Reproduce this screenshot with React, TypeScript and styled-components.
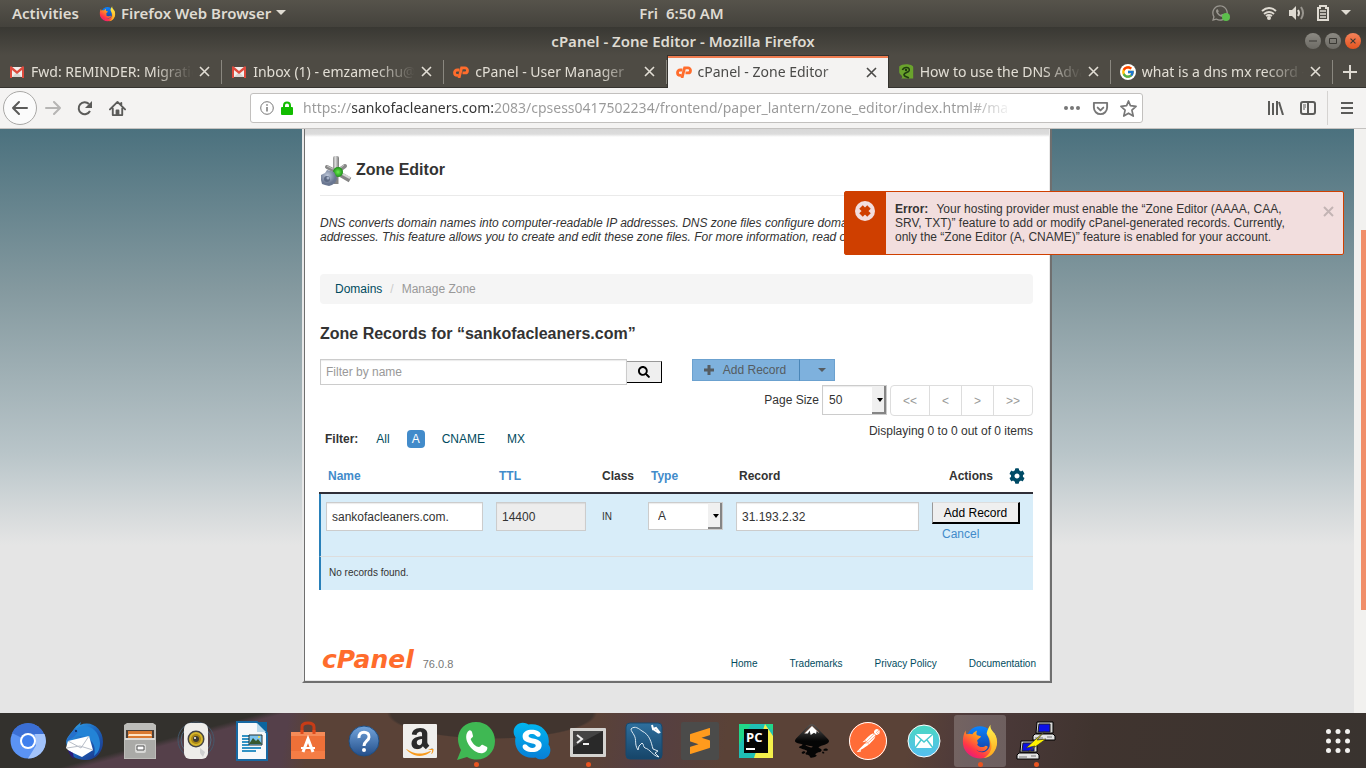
import React from "react";
import styled, { createGlobalStyle, css } from "styled-components";
import { FaAmazon, FaSkype, FaWhatsapp, FaCog, FaSearch } from "react-icons/fa";
import { SiInkscape, SiPostman, SiSublimetext } from "react-icons/si";
import { FcGoogle } from "react-icons/fc";

const uiFont = `"Noto Sans", "Open Sans", sans-serif`;
const pageFont = `"Liberation Sans", Arial, sans-serif`;

const GlobalStyle = createGlobalStyle`
  * { box-sizing: border-box; }
  body { margin: 0; font-family: ${pageFont}; font-size: 12px; line-height: 14px; color: #333; }
  button, input, select { font: inherit; color: inherit; margin: 0; padding: 0; }
  button { background: none; border: 0; }
  a { text-decoration: none; color: inherit; }
  h1, h2, p { margin: 0; }
  svg { display: block; flex: none; }
`;

const Desktop = styled.div`
  min-height: 100vh;
  display: flex;
  flex-direction: column;
`;

/* ---------- system bar and window title ---------- */

const SystemBar = styled.header`
  height: 27px;
  display: grid;
  grid-template-columns: 1fr auto 1fr;
  align-items: center;
  padding: 0 15px 1px 12px;
  background: linear-gradient(#56534b, #44423c);
  color: #dfdbd2;
  font: 600 15px/20px ${uiFont};
`;
const SystemGroup = styled.div<{ $end?: boolean }>`
  display: flex;
  align-items: center;
  gap: ${(p) => (p.$end ? "12px" : "20px")};
  justify-content: ${(p) => (p.$end ? "flex-end" : "flex-start")};
`;
const SystemButton = styled.button`
  display: flex;
  align-items: center;
  gap: 5px;
`;
const TrayWhatsApp = styled.span`
  position: relative;
  margin-right: 20px;
  color: #99968f;
  &::after {
    content: "";
    position: absolute;
    right: -1px;
    bottom: 1px;
    width: 8px;
    height: 8px;
    border-radius: 50%;
    background: #5cbf4c;
  }
`;
const TitleBar = styled.div`
  height: 28px;
  display: grid;
  grid-template-columns: 1fr auto 1fr;
  align-items: center;
  padding: 0 5px;
  background: linear-gradient(#393833, #4e4b44);
  color: #dfdbd2;
  font: 600 15px/20px ${uiFont};
`;
const WindowButtons = styled.div`
  display: flex;
  justify-content: flex-end;
  gap: 4px;
`;
const WindowButton = styled.button<{ $close?: boolean }>`
  width: 16px;
  height: 16px;
  border-radius: 50%;
  display: grid;
  place-items: center;
  color: #3a3934;
  background: ${(p) => (p.$close ? "linear-gradient(#f3825a, #e5541f)" : "linear-gradient(#8c8a83, #6c6a64)")};
`;

/* ---------- browser chrome ---------- */

const TabStrip = styled.nav`
  display: flex;
  height: 33px;
  background: #4e4b44;
  box-shadow: inset 0 -1px #35332f;
`;
const TabItem = styled.div<{ $active?: boolean }>`
  flex: 1 1 0;
  min-width: 0;
  display: flex;
  align-items: center;
  gap: 6px;
  padding: 0 12px 0 9px;
  font: 400 14px/20px ${uiFont};
  color: #e2ded5;
  background: linear-gradient(#8a877f, #8a877f) right 5px / 1px 24px no-repeat;
  ${(p) =>
    p.$active &&
    css`
      background: #f4f3f2;
      color: #4a4a48;
      border: solid #35332f;
      border-width: 1px 1px 0;
      padding: 0 11px 0 8px;
      box-shadow: inset 0 2px #ef7c50;
    `}
`;
const TabIcon = styled.span`
  width: 16px;
  display: grid;
  place-items: center;
`;
const TabLabel = styled.a`
  flex: 1;
  min-width: 0;
  overflow: hidden;
  white-space: nowrap;
  mask-image: linear-gradient(to right, #000 calc(100% - 40px), transparent);
`;
const NewTab = styled.button`
  width: 33px;
  display: grid;
  place-items: center;
  color: #dedad2;
`;
const Toolbar = styled.div`
  height: 41px;
  display: flex;
  align-items: center;
  padding: 0 3px;
  background: #f4f3f2;
  border-bottom: 1px solid #c4c2c0;
  color: #5b5b59;
`;
const BackButton = styled.button`
  width: 34px;
  height: 34px;
  border: 1px solid #a9a8a6;
  border-radius: 50%;
  background: #fbfbfb;
  display: grid;
  place-items: center;
`;
const ToolButton = styled.button<{ $faded?: boolean }>`
  width: 32px;
  height: 32px;
  display: grid;
  place-items: center;
  opacity: ${(p) => (p.$faded ? 0.4 : 1)};
`;
const AddressBar = styled.form`
  flex: 1;
  min-width: 0;
  height: 30px;
  margin: 0 117px;
  display: flex;
  align-items: center;
  gap: 6px;
  padding: 0 3px 0 9px;
  background: #fff;
  border: 1px solid #c2c0be;
  border-radius: 3px;
  color: #777;
`;
const AddressInput = styled.input`
  flex: 1;
  min-width: 0;
  margin: 0 26px 0 3px;
  padding: 0;
  border: 0;
  outline: 0;
  font: 400 14px/20px ${uiFont};
  color: transparent;
  background: linear-gradient(to right, #999 49px, #333 49px, #333 190px, #999 190px, #999 calc(100% - 60px), #fff calc(100% - 16px));
  background-clip: text;
`;
const AddressButton = styled.button`
  width: 22px;
  height: 22px;
  display: grid;
  place-items: center;
`;
const MenuDivider = styled.div`
  width: 1px;
  height: 34px;
  margin: 0 3px;
  background: #d5d3d1;
`;

/* ---------- page ---------- */

const Viewport = styled.div`
  flex: 1;
  display: flex;
`;
const Page = styled.main`
  position: relative;
  flex: 1;
  min-width: 0;
  padding-bottom: 30px;
  background: linear-gradient(#4b717e, #84999f 160px, #b9c5c9 325px, #e5e5e5 416px);
`;
const ScrollTrack = styled.div`
  width: 12px;
  padding: 101px 0 103px 7px;
  background: #f2f1ef;
  display: flex;
`;
const ScrollThumb = styled.div`
  flex: 1;
  background: #f08e69;
`;
const Panel = styled.div`
  max-width: 750px;
  margin: 0 auto;
  padding: 26px 17px 9px 16px;
  background: linear-gradient(#d8d8d8, #dcdcdc 5px, #fff 8px);
  border: solid #6f6f6f;
  border-width: 0 2px 2px 2px;
  border-left-color: #e8e8e8;
  box-shadow: inset 1px 0 #6f6f6f, inset -1px -1px #e8e8e8;
`;
const PageTitle = styled.div`
  display: flex;
  align-items: center;
  gap: 4px;
  padding-bottom: 8px;
  border-bottom: 1px solid #eaeaea;
`;
const Heading = styled.h1`
  font-size: 16px;
  line-height: 20px;
  padding-bottom: 2px;
`;
const SubHeading = styled.h2`
  font-size: 16px;
  line-height: 20px;
  margin: 20px 0 15px;
`;
const Intro = styled.p`
  font-style: italic;
  margin: 20px 0 30px;
`;
const Crumbs = styled.nav`
  display: flex;
  gap: 8px;
  padding: 8px 15px;
  background: #f5f5f5;
  border-radius: 4px;
  color: #999;
`;
const CrumbSlash = styled.span`
  color: #ccc;
`;
const PageLink = styled.a`
  color: #004b5e;
`;
const SearchRow = styled.div`
  display: flex;
  align-items: flex-start;
`;
const SearchGroup = styled.form`
  display: flex;
  align-items: center;
  width: 342px;
  margin-right: 30px;
`;
const TextInput = styled.input`
  width: 100%;
  height: 29px;
  padding: 0 5px;
  border: 1px solid #ccc;
  background: #fff;
  box-shadow: inset 0 1px 1px rgba(0, 0, 0, 0.08);
  &:read-only {
    background: #ededed;
  }
  &::placeholder {
    color: #999;
  }
`;
const SearchInput = styled(TextInput)`
  flex: 1;
  height: 26px;
`;
const SearchButton = styled.button`
  width: 35px;
  height: 22px;
  display: grid;
  place-items: center;
  background: #efefef;
  border: solid #000;
  border-width: 1px 1px 1px 0;
  border-top-color: #999;
  color: #000;
`;
const SplitButton = styled.div`
  display: flex;
`;
const SplitPart = styled.button<{ $caret?: boolean }>`
  height: 22px;
  width: ${(p) => (p.$caret ? "36px" : "108px")};
  display: flex;
  align-items: center;
  justify-content: center;
  gap: 8px;
  padding: ${(p) => (p.$caret ? "0 0 0 9px" : "0 3px 0 0")};
  background: #7eb1dd;
  border: 1px solid #6ba1cf;
  border-left-color: ${(p) => (p.$caret ? "#4a86b8" : "#6ba1cf")};
  margin-left: ${(p) => (p.$caret ? "-1px" : "0")};
  color: #555c62;
`;
const Pager = styled.div`
  display: flex;
  justify-content: flex-end;
  align-items: flex-start;
`;
const PagerLabel = styled.label`
  padding: 8px 3px 0 0;
`;
const SelectBox = styled.div<{ $small?: boolean }>`
  position: relative;
  width: ${(p) => (p.$small ? "65px" : "75px")};
  height: ${(p) => (p.$small ? "30px" : "28px")};
  &::after {
    content: "";
    position: absolute;
    top: 1px;
    right: 1px;
    bottom: 1px;
    width: 12px;
    border: solid #858585;
    border-width: 0 2px 2px 0;
    background: linear-gradient(#f0f0f0, #f0f0f0);
    pointer-events: none;
  }
  &::before {
    content: "";
    position: absolute;
    z-index: 1;
    top: calc(50% - 2px);
    right: 4px;
    border: solid transparent;
    border-width: 4px 3px 0;
    border-top-color: #000;
    pointer-events: none;
  }
`;
const Select = styled.select<{ $indent?: boolean }>`
  appearance: none;
  width: 100%;
  height: 100%;
  padding-left: ${(p) => (p.$indent ? "9px" : "6px")};
  border: 1px solid #ccc;
  border-radius: 0;
  background: #fff;
  box-shadow: inset 0 1px 1px rgba(0, 0, 0, 0.08);
`;
const PageButtons = styled.div`
  display: flex;
  margin-left: 3px;
  border: 1px solid #ddd;
  border-radius: 4px;
`;
const PageButton = styled.button<{ $wide?: boolean }>`
  box-sizing: content-box;
  width: ${(p) => (p.$wide ? "38px" : "31px")};
  height: 29px;
  color: #999;
  & + & {
    border-left: 1px solid #ddd;
  }
`;
const FilterRow = styled.div`
  display: flex;
  justify-content: space-between;
`;
const Filters = styled.div`
  display: flex;
  align-items: center;
  padding: 14px 0 0 5px;
`;
const FilterTitle = styled.strong`
  margin-right: 13px;
`;
const FilterLink = styled.a<{ $active?: boolean }>`
  padding: 2px 5px;
  margin-right: 12px;
  border-radius: 4px;
  color: ${(p) => (p.$active ? "#fff" : "#004b5e")};
  background: ${(p) => (p.$active ? "#428bca" : "none")};
`;
const Count = styled.div`
  padding-top: 8px;
`;
const Records = styled.table`
  width: calc(100% + 1px);
  margin-left: -1px;
  table-layout: fixed;
  border-collapse: separate;
  border-spacing: 0;
`;
const HeadCell = styled.th<{ $sortable?: boolean }>`
  padding: 21px 8px 9px;
  text-align: left;
  border-bottom: 2px solid #2f2f38;
  color: ${(p) => (p.$sortable ? "#428bca" : "#333")};
  &:first-child {
    padding-left: 9px;
  }
`;
const ActionsHead = styled.div`
  display: flex;
  align-items: center;
  justify-content: flex-end;
  height: 14px;
  gap: 16px;
  color: #333;
`;
const IconButton = styled.button`
  color: #004b66;
`;
const Cell = styled.td<{ $text?: boolean }>`
  height: 63px;
  padding: ${(p) => (p.$text ? "16px 8px" : "8px 8px 0 5px")};
  font-size: ${(p) => (p.$text ? "10px" : "12px")};
  vertical-align: top;
  background: #d8edf9;
  border-bottom: 1px solid #ddd;
  &:first-child {
    border-left: 2px solid #2980b9;
  }
`;
const EmptyCell = styled(Cell)`
  height: 33px;
  padding: 9px 8px;
  font-size: 10px;
  border-bottom: 0;
`;
const SubmitButton = styled.button`
  display: block;
  width: 88px;
  height: 22px;
  background: #efefef;
  border: solid #000;
  border-width: 1px 2px 2px 1px;
  border-top-color: #ddd;
  border-left-color: #999;
  color: #000;
`;
const CancelLink = styled.a`
  display: inline-block;
  padding: 3px 10px;
  color: #428bca;
`;
const Footer = styled.footer`
  display: flex;
  align-items: center;
  margin: 57px -3px 0 2px;
  height: 25px;
`;
const Wordmark = styled.a`
  color: #ff6c2c;
  font: italic 700 25px/25px "DejaVu Sans", sans-serif;
`;
const Version = styled.span`
  margin: 9px auto 0 9px;
  color: #777;
  font-size: 11px;
`;
const FooterLinks = styled.nav`
  display: flex;
  gap: 32px;
  margin-top: 8px;
  font-size: 10px;
`;

const Toast = styled.div`
  position: absolute;
  top: 62px;
  right: 10px;
  width: 500px;
  display: flex;
  background: #f2dede;
  border: 1px solid #cf3f00;
  border-radius: 2px;
`;
const ToastIcon = styled.div`
  width: 41px;
  padding: 9px 10px;
  background: #cf3f00;
`;
const ToastText = styled.p`
  flex: 1;
  padding: 10px 9px;
`;
const ToastTitle = styled.strong`
  margin-right: 5px;
`;
const ToastClose = styled.button`
  align-self: flex-start;
  padding: 14px 9px 0 4px;
  color: #c3b4b4;
`;

/* ---------- dock ---------- */

const Dock = styled.nav`
  height: 55px;
  display: flex;
  align-items: center;
  background:
    radial-gradient(ellipse 105px 26px at 492px 0, #41352f 96%, transparent),
    linear-gradient(165deg, #33312d 68px, transparent 74px) 0 0 / 300px 55px no-repeat,
    linear-gradient(100deg, #55404a 0 285px, #5a4237 310px 590px, #553f43 640px, #5a4237 720px 900px, #4d3a3b 960px, #40342f 1080px, #39332f);
`;
const DockButton = styled.button<{ $active?: boolean; $running?: boolean; $last?: boolean }>`
  position: relative;
  width: 52px;
  height: 52px;
  margin: 0 2px;
  margin-left: ${(p) => (p.$last ? "auto" : "2px")};
  border-radius: 3px;
  display: grid;
  place-items: center;
  background: ${(p) => (p.$active ? "rgba(255,255,255,0.2)" : "none")};
  ${(p) =>
    p.$running &&
    css`
      &::after {
        content: "";
        position: absolute;
        left: 24px;
        bottom: 0;
        width: 5px;
        height: 5px;
        border-radius: 50%;
        background: #e95420;
      }
    `}
`;

/* ---------- drawings ---------- */

const Art = ({ children, size = 40 }: { children: React.ReactNode; size?: number }) => (
  <svg width={size} height={size} viewBox="0 0 40 40" aria-hidden="true">{children}</svg>
);

const Caret = () => (
  <svg width="10" height="6" viewBox="0 0 10 6" aria-hidden="true"><path d="M0 0h10L5 5z" fill="currentColor" /></svg>
);

const Cross = ({ size = 11, width = 2 }: { size?: number; width?: number }) => (
  <svg width={size} height={size} viewBox="0 0 11 11" aria-hidden="true">
    <path d="M1 1l9 9M10 1l-9 9" stroke="currentColor" strokeWidth={width} />
  </svg>
);

const Firefox = ({ size, id }: { size: number; id: string }) => (
  <Art size={size}>
    <defs>
      <linearGradient id={id + "a"} x1="1" y1="0" x2="0.2" y2="1">
        <stop offset="0" stopColor="#ffe226" /><stop offset=".4" stopColor="#ff9a1f" />
        <stop offset=".75" stopColor="#ff3647" /><stop offset="1" stopColor="#e31587" />
      </linearGradient>
      <linearGradient id={id + "b"} x1="0" y1="0" x2="0" y2="1">
        <stop offset="0" stopColor="#0a84ff" /><stop offset="1" stopColor="#183b9c" />
      </linearGradient>
      <linearGradient id={id + "c"} x1="0" y1="0" x2="0" y2="1">
        <stop offset="0" stopColor="#fff44f" /><stop offset="1" stopColor="#ffa41c" />
      </linearGradient>
    </defs>
    <circle cx="20" cy="19" r="14.5" fill={`url(#${id}b)`} />
    <path d="M5 9c0 3 0 3 1 4 2-1 4-1 6 0 1-2 3-3 5-4-1 2-1 4 0 5l4 1c0 2-4 3-4 5 1 2 1 2 0 4 2 3 7 3 9 1 2 0 2 1 2 2-3 5-9 5-12 2 4 5 12 3 14-3 1-6-1-10-3-13 4 1 7 5 8 8 1-4 0-8-1-11 4 6 5 14 1 20C28 42 9 41 3 27 1 21 2 13 5 9z" fill={`url(#${id}a)`} />
    <path d="M27 12c1-4 2-6 4-9-1 7 7 8 7 18 0 9-6 16-14 17 7-4 10-11 7-18-1-4-3-6-4-8z" fill={`url(#${id}c)`} />
  </Art>
);

const CpMark = () => (
  <svg width="16" height="12" viewBox="0 0 16 12" fill="none" stroke="#ff6c2c" strokeWidth="2.8" aria-hidden="true">
    <path d="M6.500 4H4.200a2.600 2.600 0 0 0 0 5.400H5.600" />
    <path d="M6 12L8.600 1.900H12a2.400 2.400 0 0 1 0 5H9.500" />
  </svg>
);

const Gmail = () => (
  <svg width="14" height="12" viewBox="0 0 14 12" aria-hidden="true">
    <path d="M1 1h12v10H1z" fill="#f2f0ee" /><path d="M2 11l5-5 5 5z" fill="#d9d5d2" />
    <path d="M0 12V1l1-1 6 5 6-5 1 1v11h-2V4L7 8 2 4v8z" fill="#dd4b3e" />
  </svg>
);

const Dns = () => (
  <Art size={16}>
    <path d="M3 6C12-3 38 0 38 8v28H8c8-6-6-10-5-16z" fill="#6aa32c" />
    <path d="M11 15c4-9 19-8 17 1-2 6-11 4-13 10 0 6 8 6 12 9" fill="none" stroke="#1f3b10" strokeWidth="4" />
    <circle cx="20" cy="15" r="3" fill="#1f3b10" />
  </Art>
);

const ZoneIcon = () => (
  <svg width="32" height="32" viewBox="0 0 32 32" aria-hidden="true">
    <defs>
      <radialGradient id="zg"><stop offset="0" stopColor="#6bf04d" /><stop offset="1" stopColor="#1e8d1a" /></radialGradient>
      <linearGradient id="zs"><stop offset="0" stopColor="#8c8c8c" /><stop offset=".4" stopColor="#ddd" /><stop offset="1" stopColor="#777" /></linearGradient>
      <radialGradient id="zb" cx=".4" cy=".35"><stop offset="0" stopColor="#bcc6d8" /><stop offset="1" stopColor="#6a7791" /></radialGradient>
    </defs>
    <path d="M7 12l8 4M25 11l-7 5" stroke="#888" strokeWidth="4" strokeLinecap="round" />
    <path d="M7 11l8 4M24 10l-5 4" stroke="#c4c4c4" strokeWidth="1" />
    <path d="M18 18l12 7M16 20v9" stroke="#858585" strokeWidth="5" />
    <path d="M19 17l11 6" stroke="#d4d4d4" strokeWidth="2" />
    <rect x="13" y="1" width="6" height="15" rx="2" fill="url(#zs)" />
    <circle cx="18" cy="17" r="5" fill="url(#zg)" />
    <path d="M1 20l4-2 2-3 4 1 3 1 2 4 1 3-2 4-3 2-3 1-4-1-3-1-1-4z" fill="url(#zb)" />
    <circle cx="7" cy="24" r="3" fill="#5d6a84" /><circle cx="8" cy="23" r="1.5" fill="#a4b1c8" />
  </svg>
);

const Putty = () => (
  <Art>
    {[[17, 1], [1, 20]].map(([x, y]) => (
      <g key={x} transform={`translate(${x} ${y})`}>
        <path d="M4 0h16v11H3z" fill="#d6d6d6" stroke="#000" /><path d="M6 2h11v8H5z" fill="#0b10e8" stroke="#222" />
        <path d="M2 12h18l2 2v4H0v-4z" fill="#e4e4e4" stroke="#000" /><path d="M2 16h8M14 15h5" stroke="#777" />
      </g>
    ))}
    <path d="M29 10L10 27l9-2-7 6 18-13-9 1z" fill="#fff200" stroke="#333" strokeWidth=".7" />
  </Art>
);

type App = { name: string; art: React.ReactNode; running?: boolean; active?: boolean };

const apps: App[] = [
  { name: "Chromium", art: (
    <Art>
      <circle cx="20" cy="20" r="17.5" fill="#5b93f4" />
      <path d="M20 20L4 12A17.500 17.500 0 0 1 36 13H20z" fill="#3b6fd4" />
      <path d="M20 37.500l8-13L27 13h9.500A17.500 17.500 0 0 1 20 37.500z" fill="#a2c3fb" />
      <circle cx="20" cy="20" r="8" fill="#fff" /><circle cx="20" cy="20" r="6" fill="#4080ee" />
    </Art>) },
  { name: "Thunderbird", art: (
    <Art>
      <defs><linearGradient id="tb" x1="0" y1="0" x2="1" y2="1"><stop offset="0" stopColor="#36aef0" /><stop offset=".5" stopColor="#1d67bf" /><stop offset="1" stopColor="#1c2f80" /></linearGradient></defs>
      <path d="M10 8c3-4 6-6 7-7l-1 3C28-1 39 8 39 21c0 10-7 18-17 18C11 39 5 34 3 25 0 18 6 14 10 8z" fill="url(#tb)" />
      <path d="M12 8c9-7 23-1 24 14 0 6-2 10-6 13 3-10-2-21-18-20z" fill="#2383d6" />
      <path d="M4 20l21-5 4 14-11 7-13-6-3-3z" fill="#fff" /><path d="M4 20l13 7 8-12M3 27l13-2 13 4" fill="none" stroke="#b8bec8" />
      <path d="M4 29c1 4 3 7 6 9l-1-6z" fill="#2c1c7c" /><path d="M2 21c2-6 6-9 9-14l3 4-4 5z" fill="#2671cc" /><circle cx="12" cy="10" r="1" fill="#0c2552" />
    </Art>) },
  { name: "Files", art: (
    <Art>
      <path d="M4 4l3-2h26l3 2v34H4z" fill="#bdbdb9" /><path d="M6 9h28v9H6z" fill="#493f38" />
      <path d="M8 10h24v7H8z" fill="#d97a31" /><path d="M9 13h22l1 2H8z" fill="#ffe4c4" /><path d="M5 17h30v20H5z" fill="#aaaaa7" />
      <path d="M5 17h30v2H5z" fill="#dbdbd8" /><rect x="15" y="23" width="11" height="9" rx="2" fill="#d8d8d6" /><path d="M17 25h7v4h-7z" fill="#fff" stroke="#555" />
    </Art>) },
  { name: "Rhythmbox", art: (
    <Art>
      <circle cx="20" cy="19" r="18" fill="none" stroke="#44586b" strokeWidth="1" /><circle cx="20" cy="19" r="15" fill="none" stroke="#526b80" strokeWidth="1" />
      <rect x="8" y="2" width="24" height="36" rx="6" fill="#eeedea" /><circle cx="20" cy="18" r="8.5" fill="#444" /><circle cx="20" cy="18" r="7" fill="#d6b62b" />
      <circle cx="20" cy="18" r="5" fill="#a98616" /><circle cx="20" cy="18" r="3" fill="#3c3a33" /><circle cx="19" cy="17" r="1" fill="#fff" />
      <path d="M24 27l5 4-2 5-3-4z" fill="#cfd0d0" />
    </Art>) },
  { name: "LibreOffice Writer", art: (
    <Art>
      <path d="M5 1h20l10 11v27H5z" fill="#f7f9fa" stroke="#1769a3" strokeWidth="2" /><path d="M24 1h11v11z" fill="#0b659f" />
      <path d="M25 2v9h9z" fill="#b8d9ec" /><path d="M10 15h7M10 18h7M10 21h7M10 24h7M10 27h19M10 30h14" stroke="#3293c5" strokeWidth="2" />
      <path d="M17 14h13v10H17z" fill="#7cc4ef" stroke="#233" /><path d="M17 23l4-6 3 3 2-2 4 5z" fill="#35582f" /><circle cx="27" cy="16" r="1" fill="#ffe23b" />
    </Art>) },
  { name: "Ubuntu Software", art: (
    <Art>
      <path d="M14 13V6q0-4 6-4t6 4v7" fill="none" stroke="#c63c17" strokeWidth="3" /><path d="M3 11h34v27H3z" fill="#ee7038" />
      <path d="M3 11h34v4H3z" fill="#f58b58" /><path d="M3 30h34v8H3z" fill="#f47d45" /><path d="M14 9v4M26 9v4" stroke="#de4a1c" strokeWidth="3" />
      <path d="M15 31l5-13 5 13" fill="none" stroke="#fff" strokeWidth="3" /><path d="M13 27h14" stroke="#fff" strokeWidth="2" />
    </Art>) },
  { name: "Help", art: (
    <Art>
      <defs><linearGradient id="hp" x1="0" y1="0" x2="0" y2="1"><stop offset="0" stopColor="#72a4dc" /><stop offset="1" stopColor="#244f8a" /></linearGradient></defs>
      <circle cx="20" cy="20" r="15" fill="url(#hp)" stroke="#1f4f83" />
      <path d="M15 17c-1-8 11-7 10-1 0 4-5 4-5 9" fill="none" stroke="#fff" strokeWidth="3" /><circle cx="20" cy="29" r="2" fill="#fff" />
    </Art>) },
  { name: "Amazon", art: (
    <Art>
      <defs><linearGradient id="am" x1="0" y1="0" x2="0" y2="1"><stop offset=".74" stopColor="#2b2b2b" /><stop offset=".74" stopColor="#f89a1d" /></linearGradient></defs>
      <rect x="3" y="3" width="34" height="34" rx="1" fill="#f0efed" /><FaAmazon x="4" y="5" size={32} fill="url(#am)" />
    </Art>) },
  { name: "WhatsApp", running: true, art: (
    <Art>
      <path d="M1 39l4-10C-3 14 6 1 20 1c11 0 19 8 19 19 0 15-15 23-28 16z" fill="#3fb853" />
      <path d="M11 12c2-4 4-3 5-1l1 4c0 2-3 2-2 4 2 4 5 7 8 7 2 0 2-3 4-2l4 2c1 1 0 5-4 6-8 2-20-11-16-20z" fill="#fff" />
    </Art>) },
  { name: "Skype", art: (
    <Art>
      <defs><linearGradient id="sk" x1="0" y1="0" x2="0" y2="1"><stop offset="0" stopColor="#00b7f1" /><stop offset="1" stopColor="#087ed6" /></linearGradient></defs>
      <circle cx="20" cy="20" r="13" fill="#fff" /><FaSkype x="-1" y="-1" size={42} fill="url(#sk)" />
    </Art>) },
  { name: "Terminal", running: true, art: (
    <Art>
      <rect x="2" y="7" width="36" height="29" rx="1" fill="#d4d3d0" /><rect x="5" y="10" width="30" height="23" fill="#292929" /><path d="M5 10h30L5 26z" fill="#444" />
      <path d="M9 14l5 4-5 4M15 23h6" fill="none" stroke="#eee" strokeWidth="2" />
    </Art>) },
  { name: "MySQL Workbench", art: (
    <Art>
      <defs><linearGradient id="my" x1="0" y1="0" x2="0" y2="1"><stop offset="0" stopColor="#2e6f9e" /><stop offset="1" stopColor="#164569" /></linearGradient></defs>
      <rect x="2" y="2" width="36" height="36" rx="4" fill="url(#my)" stroke="#17496e" />
      <path d="M7 8c4-4 8 0 11 2 8 4 9 11 11 18l5 2-3 2 4 4c-6-1-9-8-14-9-2-1-1-4-3-5l-3 3-1 4c-4-6-1-10-4-15-1-2-3-4-3-6z" fill="none" stroke="#dbe8f1" strokeWidth="1" />
      <path d="M28 4l1 4 3-1 4 5M29 8l6 4" fill="none" stroke="#fff" strokeWidth="2" />
    </Art>) },
  { name: "Sublime Text", art: (
    <Art><rect x="1" y="1" width="38" height="38" rx="2" fill="#4b4b4a" /><SiSublimetext x="7" y="7" size={26} fill="#ff9b1d" /></Art>) },
  { name: "PyCharm", art: (
    <Art>
      <path d="M3 3h34v34H3z" fill="#21d789" /><path d="M15 3h14l8 7v14L20 37H3V24z" fill="#1fbfb5" /><path d="M29 3l8 12v22H18z" fill="#f4f04a" />
      <path d="M8 8h24v24H8z" fill="#050505" /><text x="10" y="21" fill="#fff" fontFamily="Open Sans, sans-serif" fontSize="13" fontWeight="700">PC</text><path d="M10 28h9" stroke="#fff" strokeWidth="2" />
    </Art>) },
  { name: "Inkscape", art: (
    <Art>
      <defs><linearGradient id="ik" x1="0" y1="0" x2="0" y2="1"><stop offset="0" stopColor="#555" /><stop offset=".5" stopColor="#050505" /></linearGradient></defs>
      <path d="M12 13l8-8 8 8-3 2-3-2-3 3-2-3z" fill="#fff" /><SiInkscape x="3" y="3" size={34} fill="url(#ik)" />
    </Art>) },
  { name: "Postman", art: (
    <Art><circle cx="20" cy="20" r="18" fill="#fff" /><SiPostman x="1" y="1" size={38} fill="#ff6c37" /><circle cx="20" cy="20" r="18.5" fill="none" stroke="#fff" /></Art>) },
  { name: "Mail", art: (
    <Art>
      <defs><linearGradient id="ml" x1="0" y1="0" x2="0" y2="1"><stop offset="0" stopColor="#4ad9c2" /><stop offset="1" stopColor="#55bdf0" /></linearGradient></defs>
      <circle cx="20" cy="20" r="16" fill="url(#ml)" stroke="#fff" /><path d="M11 13h18v14H11z" fill="#fff" /><path d="M11 13l9 8 9-8M11 27l6-8M29 27l-6-8" fill="none" stroke="#4acad0" strokeWidth="1.5" />
    </Art>) },
  { name: "Firefox", running: true, active: true, art: <Firefox size={38} id="dock" /> },
  { name: "PuTTY", running: true, art: <Putty /> },
];

const tabs = [
  { label: "Fwd: REMINDER: Migration of", icon: <Gmail /> },
  { label: "Inbox (1) - emzamechu@gmail", icon: <Gmail /> },
  { label: "cPanel - User Manager", icon: <CpMark /> },
  { label: "cPanel - Zone Editor", icon: <CpMark />, active: true },
  { label: "How to use the DNS Advanced", icon: <Dns /> },
  { label: "what is a dns mx record - Google", icon: (
    <svg width="16" height="16" viewBox="0 0 16 16" aria-hidden="true"><circle cx="8" cy="8" r="8" fill="#fff" /><FcGoogle x="1" y="1" size={14} /></svg>) },
];

const Line = ({ d, size = 18, w = 2 }: { d: string; size?: number; w?: number }) => (
  <svg width={size} height={size} viewBox="0 0 18 18" fill="none" stroke="currentColor" strokeWidth={w} strokeLinecap="round" strokeLinejoin="round" aria-hidden="true"><path d={d} /></svg>
);

export default function App() {
  return (
    <Desktop>
      <GlobalStyle />
      <SystemBar>
        <SystemGroup>
          <SystemButton>Activities</SystemButton>
          <SystemButton><Firefox size={17} id="menu" />Firefox Web Browser<Caret /></SystemButton>
        </SystemGroup>
        <SystemButton>Fri&nbsp; 6:50 AM</SystemButton>
        <SystemGroup $end>
          <TrayWhatsApp><FaWhatsapp size={18} /></TrayWhatsApp>
          <svg width="16" height="14" viewBox="0 0 16 14" fill="none" stroke="currentColor" strokeWidth="2" aria-hidden="true">
            <path d="M1 5q7-6 14 0M3 8q5-4 10 0" /><path d="M5 10q3-2 6 0" /><circle cx="8" cy="12" r="1" />
          </svg>
          <svg width="16" height="14" viewBox="0 0 16 14" aria-hidden="true">
            <path d="M0 4h3l4-4v14l-4-4H0z" fill="currentColor" /><path d="M9 4q2 3 0 6" fill="none" stroke="currentColor" strokeWidth="2" /><path d="M12 1q4 6 0 12" fill="none" stroke="#99968f" strokeWidth="2" />
          </svg>
          <svg width="12" height="16" viewBox="0 0 12 16" aria-hidden="true">
            <path d="M1 3h2V1h6v2h2v12H1z" fill="none" stroke="currentColor" strokeWidth="2" /><path d="M3 6h6M3 9h6M3 12h6" stroke="currentColor" strokeWidth="1.5" />
          </svg>
          <Caret />
        </SystemGroup>
      </SystemBar>
      <TitleBar>
        <span />
        <span>cPanel - Zone Editor - Mozilla Firefox</span>
        <WindowButtons>
          <WindowButton aria-label="Minimize"><svg width="8" height="8" aria-hidden="true"><path d="M0 4h8" stroke="currentColor" /></svg></WindowButton>
          <WindowButton aria-label="Maximize"><svg width="8" height="8" aria-hidden="true"><path d="M.5 1.500h7v5h-7z" fill="none" stroke="currentColor" /></svg></WindowButton>
          <WindowButton aria-label="Close window" $close><Cross size={6} width={2} /></WindowButton>
        </WindowButtons>
      </TitleBar>

      <TabStrip>
        {tabs.map((t) => (
          <TabItem key={t.label} $active={t.active}>
            <TabIcon>{t.icon}</TabIcon>
            <TabLabel href="#">{t.label}</TabLabel>
            <SystemButton aria-label="Close tab"><Cross size={11} width={1.6} /></SystemButton>
          </TabItem>
        ))}
        <NewTab aria-label="New tab"><svg width="14" height="14" aria-hidden="true"><path d="M7 0v14M0 7h14" stroke="currentColor" strokeWidth="2" /></svg></NewTab>
      </TabStrip>

      <Toolbar>
        <BackButton aria-label="Back"><Line d="M16 9H2M8 3L2 9l6 6" /></BackButton>
        <ToolButton aria-label="Forward" $faded><Line d="M2 9h14M10 3l6 6-6 6" /></ToolButton>
        <ToolButton aria-label="Reload">
          <svg width="16" height="16" viewBox="0 0 16 16" aria-hidden="true"><path d="M13 11a6 6 0 1 1-1-7" fill="none" stroke="currentColor" strokeWidth="2" /><path d="M15 1v7H8z" fill="currentColor" /></svg>
        </ToolButton>
        <ToolButton aria-label="Home"><Line d="M1 10l8-8 8 8M4 9v7h10V9M8 15v-4h2v4M13 3v3" size={17} /></ToolButton>
        <AddressBar>
          <svg width="14" height="14" viewBox="0 0 14 14" aria-hidden="true"><circle cx="7" cy="7" r="6.3" fill="none" stroke="currentColor" /><path d="M7 6v4.500M7 3.200v1.500" stroke="currentColor" strokeWidth="1.5" /></svg>
          <svg width="14" height="15" viewBox="0 0 14 15" aria-hidden="true"><path d="M4 7V4.500a3 3 0 0 1 6 0V7" fill="none" stroke="#12bc00" strokeWidth="2" /><rect x="1" y="6" width="12" height="8" rx="1" fill="#12bc00" /></svg>
          <AddressInput aria-label="Address" defaultValue="https://sankofacleaners.com:2083/cpsess0417502234/frontend/paper_lantern/zone_editor/index.html#/ma" />
          <AddressButton type="button" aria-label="Page actions"><svg width="16" height="4" aria-hidden="true"><circle cx="2" cy="2" r="2" fill="#777" /><circle cx="8" cy="2" r="2" fill="#777" /><circle cx="14" cy="2" r="2" fill="#777" /></svg></AddressButton>
          <AddressButton type="button" aria-label="Save to Pocket"><Line d="M2 3h14v5a7 7 0 0 1-14 0zM6 8l3 3 3-3" size={17} /></AddressButton>
          <AddressButton type="button" aria-label="Bookmark"><Line d="M9 1l2 5 6 .7-4.400 4L14 17l-5-3-5 3 1.400-6.300L1 6.700 7 6z" size={17} w={1.8} /></AddressButton>
        </AddressBar>
        <ToolButton aria-label="Library"><svg width="16" height="14" viewBox="0 0 16 14" aria-hidden="true"><path d="M1 0v14M5 2v12M9 0v14M11 1l4 13" stroke="currentColor" strokeWidth="2" /></svg></ToolButton>
        <ToolButton aria-label="Sidebars"><svg width="16" height="14" viewBox="0 0 16 14" fill="none" stroke="currentColor" strokeWidth="2" aria-hidden="true"><rect x="1" y="1" width="14" height="12" rx="2" /><path d="M8 1v12" /><path d="M3 4h3M3 6h3M3 8h2" strokeWidth="1" /></svg></ToolButton>
        <MenuDivider />
        <ToolButton aria-label="Menu"><svg width="12" height="12" aria-hidden="true"><path d="M0 1h12M0 6h12M0 11h12" stroke="currentColor" strokeWidth="2" /></svg></ToolButton>
      </Toolbar>

      <Viewport>
        <Page>
          <Panel>
            <PageTitle><ZoneIcon /><Heading>Zone Editor</Heading></PageTitle>
            <Intro>
              DNS converts domain names into computer-readable IP addresses. DNS zone files configure domain names to the correct IP<br />
              addresses. This feature allows you to create and edit these zone files. For more information, read our documentation.
            </Intro>
            <Crumbs><PageLink href="#">Domains</PageLink><CrumbSlash>/</CrumbSlash><span>Manage Zone</span></Crumbs>
            <SubHeading>Zone Records for “sankofacleaners.com”</SubHeading>
            <SearchRow>
              <SearchGroup>
                <SearchInput aria-label="Filter by name" placeholder="Filter by name" />
                <SearchButton type="button" aria-label="Search"><FaSearch size={12} /></SearchButton>
              </SearchGroup>
              <SplitButton>
                <SplitPart disabled>
                  <svg width="12" height="12" aria-hidden="true"><path d="M6 1v10M1 6h10" stroke="currentColor" strokeWidth="3" /></svg>
                  Add Record
                </SplitPart>
                <SplitPart disabled $caret aria-label="More record types"><svg width="8" height="4" aria-hidden="true"><path d="M0 0h8L4 4z" fill="currentColor" /></svg></SplitPart>
              </SplitButton>
            </SearchRow>
            <Pager>
              <PagerLabel htmlFor="page-size">Page Size</PagerLabel>
              <SelectBox $small><Select id="page-size"><option>50</option></Select></SelectBox>
              <PageButtons>
                <PageButton $wide>&lt;&lt;</PageButton><PageButton>&lt;</PageButton><PageButton>&gt;</PageButton><PageButton $wide>&gt;&gt;</PageButton>
              </PageButtons>
            </Pager>
            <FilterRow>
              <Filters>
                <FilterTitle>Filter:</FilterTitle>
                <FilterLink href="#">All</FilterLink><FilterLink href="#" $active>A</FilterLink>
                <FilterLink href="#">CNAME</FilterLink><FilterLink href="#">MX</FilterLink>
              </Filters>
              <Count>Displaying 0 to 0 out of 0 items</Count>
            </FilterRow>
            <Records>
              <colgroup><col width="172" /><col width="103" /><col width="49" /><col width="88" /><col /><col width="106" /></colgroup>
              <thead>
                <tr>
                  <HeadCell $sortable>Name</HeadCell><HeadCell $sortable>TTL</HeadCell><HeadCell>Class</HeadCell>
                  <HeadCell $sortable>Type</HeadCell><HeadCell>Record</HeadCell>
                  <HeadCell><ActionsHead>Actions<IconButton aria-label="Table settings"><FaCog size={16} /></IconButton></ActionsHead></HeadCell>
                </tr>
              </thead>
              <tbody>
                <tr>
                  <Cell><TextInput aria-label="Name" defaultValue="sankofacleaners.com." /></Cell>
                  <Cell><TextInput aria-label="TTL" readOnly value="14400" /></Cell>
                  <Cell $text>IN</Cell>
                  <Cell><SelectBox><Select $indent aria-label="Type"><option>A</option></Select></SelectBox></Cell>
                  <Cell><TextInput aria-label="Record" defaultValue="31.193.2.32" /></Cell>
                  <Cell><SubmitButton>Add Record</SubmitButton><CancelLink href="#">Cancel</CancelLink></Cell>
                </tr>
                <tr><EmptyCell colSpan={6}>No records found.</EmptyCell></tr>
              </tbody>
            </Records>
            <Footer>
              <Wordmark href="#">cPanel</Wordmark>
              <Version>76.0.8</Version>
              <FooterLinks>
                <PageLink href="#">Home</PageLink><PageLink href="#">Trademarks</PageLink><PageLink href="#">Privacy Policy</PageLink><PageLink href="#">Documentation</PageLink>
              </FooterLinks>
            </Footer>
          </Panel>
          <Toast role="alert">
            <ToastIcon>
              <svg width="20" height="20" viewBox="0 0 20 20" aria-hidden="true"><circle cx="10" cy="10" r="10" fill="#f2dede" /><path d="M6 6l8 8M14 6l-8 8" stroke="#cf3f00" strokeWidth="5" /></svg>
            </ToastIcon>
            <ToastText>
              <ToastTitle>Error:</ToastTitle> Your hosting provider must enable the “Zone Editor (AAAA, CAA, SRV, TXT)” feature to add or modify cPanel-generated records. Currently, only the “Zone Editor (A, CNAME)” feature is enabled for your account.
            </ToastText>
            <ToastClose aria-label="Dismiss"><Cross size={11} width={2} /></ToastClose>
          </Toast>
        </Page>
        <ScrollTrack><ScrollThumb /></ScrollTrack>
      </Viewport>

      <Dock>
        {apps.map((a) => (
          <DockButton key={a.name} aria-label={a.name} $running={a.running} $active={a.active}>{a.art}</DockButton>
        ))}
        <DockButton aria-label="Show applications" $last>
          <svg width="26" height="26" aria-hidden="true">
            {[0, 1, 2].map((r) => [0, 1, 2].map((c) => <circle key={`${r}${c}`} cx={3.5 + c * 9.5} cy={3.5 + r * 9.5} r="2.5" fill="#f2f1ef" />))}
          </svg>
        </DockButton>
      </Dock>
    </Desktop>
  );
}
